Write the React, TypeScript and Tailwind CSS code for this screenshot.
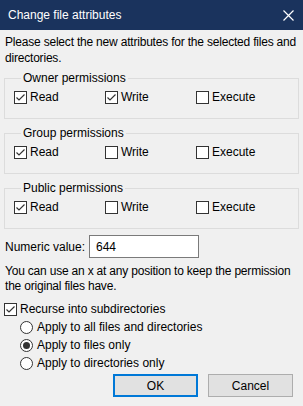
import React from "react";

function Box({ checked }: { checked?: boolean }) {
  return (
    <span className="flex h-[13px] w-[13px] shrink-0 items-center justify-center border border-[#333333] bg-white">
      {checked && (
        <svg width="11" height="11" viewBox="0 0 11 11">
          <polyline points="1.5,5.5 4,8 9.5,2.5" fill="none" stroke="#333333" strokeWidth="1.2" />
        </svg>
      )}
    </span>
  );
}

function Radio({ checked }: { checked?: boolean }) {
  return (
    <span className="flex h-[13px] w-[13px] shrink-0 items-center justify-center rounded-full border border-[#333333] bg-white">
      {checked && <span className="h-[7px] w-[7px] rounded-full bg-[#333333]" />}
    </span>
  );
}

function Check({ label, checked }: { label: string; checked?: boolean }) {
  return (
    <label className="flex items-center gap-[3px]">
      <Box checked={checked} />
      <span>{label}</span>
    </label>
  );
}

function Group({ title, perms }: { title: string; perms: boolean[] }) {
  return (
    <fieldset className="mx-[4px] h-[48px] border border-[#dcdcdc] px-[9px] pt-[3px]">
      <legend className="ml-[7px] px-[2px] leading-[15px]">{title}</legend>
      <div className="grid grid-cols-[91px_91px_1fr]">
        <Check label="Read" checked={perms[0]} />
        <Check label="Write" checked={perms[1]} />
        <Check label="Execute" checked={perms[2]} />
      </div>
    </fieldset>
  );
}

export default function App() {
  return (
    <div
      className="flex h-[406px] w-[303px] flex-col bg-[#f0f0f0] text-[12px] leading-[16px] text-black"
      style={{ fontFamily: '"Liberation Sans", Arial, sans-serif' }}
    >
      <div className="flex h-[30px] shrink-0 items-center justify-between bg-[#1a335d] pl-[8px] pr-[9px] text-white">
        <span className="text-[12px]">Change file attributes</span>
        <svg width="11" height="11" viewBox="0 0 11 11">
          <path d="M0.5 0.5 L10.5 10.5 M10.5 0.5 L0.5 10.5" stroke="white" strokeWidth="1.2" />
        </svg>
      </div>

      <p className="mt-[4px] whitespace-nowrap pl-[5px] tracking-[-0.2px]">
        Please select the new attributes for the selected files and
        <br />
        directories.
      </p>

      <div className="mt-[5px] flex flex-col gap-[7px]">
        <Group title="Owner permissions" perms={[true, true, false]} />
        <Group title="Group permissions" perms={[true, false, false]} />
        <Group title="Public permissions" perms={[true, false, false]} />
      </div>

      <div className="mt-[6px] flex items-center px-[5px]">
        <span className="w-[84px] whitespace-nowrap">Numeric value:</span>
        <div className="flex h-[23px] w-[110px] items-center border border-[#7a7a7a] bg-white px-[6px]">644</div>
      </div>

      <p className="mt-[6px] whitespace-nowrap pl-[5px] leading-[15px] tracking-[-0.2px]">
        You can use an x at any position to keep the permission
        <br />
        the original files have.
      </p>

      <div className="mt-[6px] flex flex-col px-[4px] leading-[18px]">
        <Check label="Recurse into subdirectories" checked />
        <div className="flex flex-col pl-[16px]">
          <label className="flex items-center gap-[4px]">
            <Radio />
            <span>Apply to all files and directories</span>
          </label>
          <label className="flex items-center gap-[4px]">
            <Radio checked />
            <span>Apply to files only</span>
          </label>
          <label className="flex items-center gap-[4px]">
            <Radio />
            <span>Apply to directories only</span>
          </label>
        </div>
      </div>

      <div className="mt-[2px] flex justify-end gap-[10px] pr-[10px]">
        <button className="h-[23px] w-[85px] border-2 border-[#0078d7] bg-[#e1e1e1]">OK</button>
        <button className="h-[23px] w-[85px] border border-[#adadad] bg-[#e1e1e1]">Cancel</button>
      </div>
    </div>
  );
}
